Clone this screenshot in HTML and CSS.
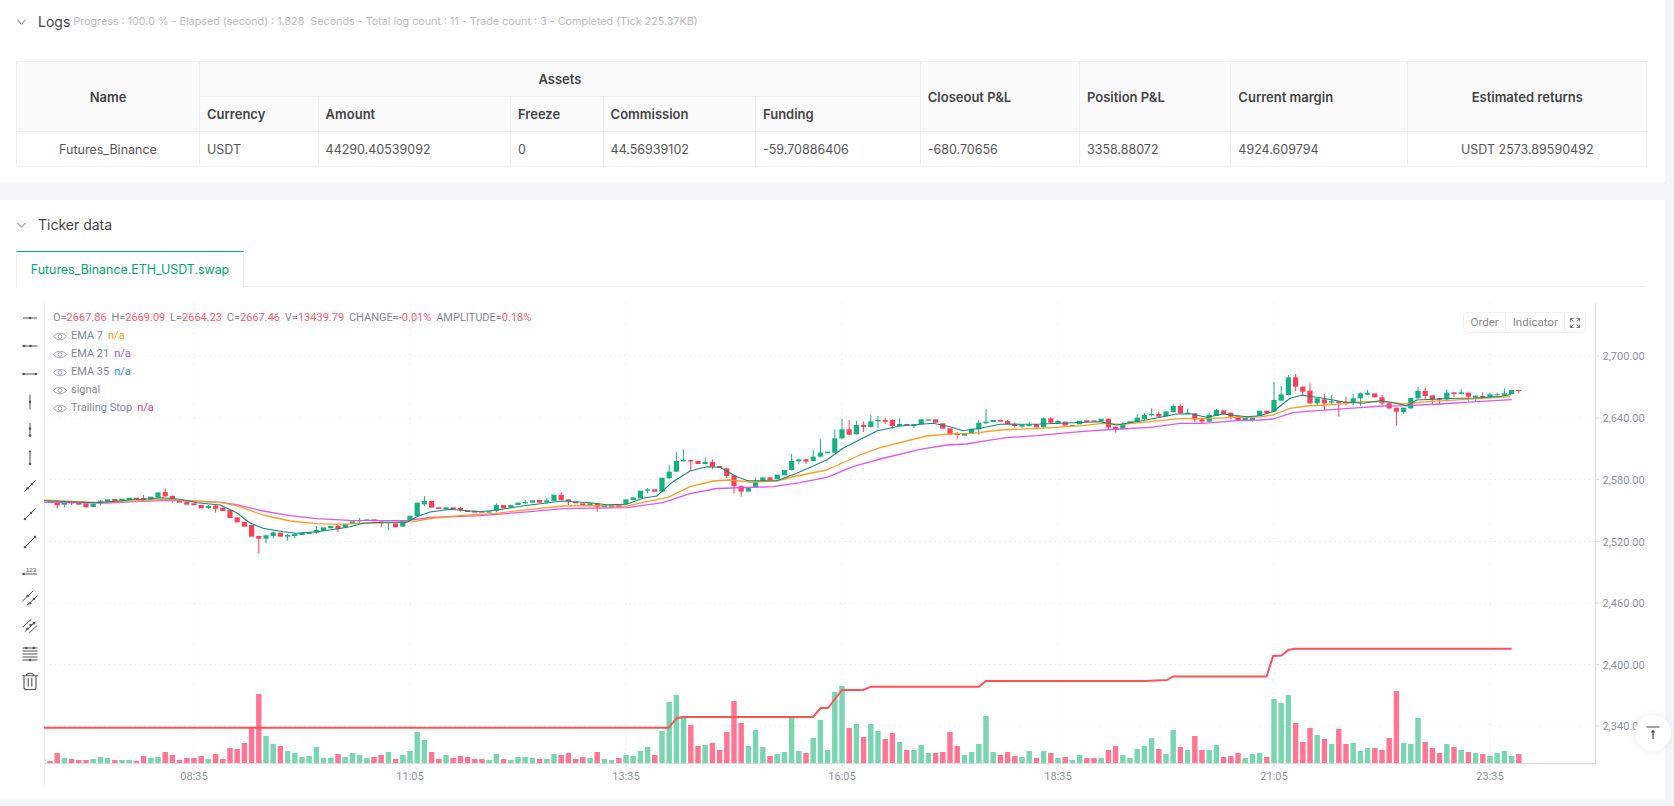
FILE: index.html
```html
<!DOCTYPE html>
<html lang="en">
<head>
<meta charset="utf-8">
<title>Backtest result</title>
<link rel="stylesheet" href="styles.css">
</head>
<body>
<section class="card card-logs">
  <header class="section-head">
    <svg class="chevron" viewBox="0 0 10 6"><path d="M.5.5 5 5.5 9.5.5"/></svg>
    <h2 class="section-title">Logs</h2>
    <span class="section-note">Progress : 100.0 % - Elapsed (second) : 1.828 &nbsp;Seconds - Total log count : 11 - Trade count : 3 - Completed (Tick 225.37KB)</span>
  </header>
  <table class="assets">
    <colgroup>
      <col class="c-name"><col class="c-currency"><col class="c-amount"><col class="c-freeze"><col class="c-commission">
      <col class="c-funding"><col class="c-closeout"><col class="c-position"><col class="c-margin"><col class="c-returns">
    </colgroup>
    <thead>
      <tr>
        <th rowspan="2" class="center">Name</th>
        <th colspan="5" class="center">Assets</th>
        <th rowspan="2">Closeout P&amp;L</th>
        <th rowspan="2">Position P&amp;L</th>
        <th rowspan="2">Current margin</th>
        <th rowspan="2" class="center">Estimated returns</th>
      </tr>
      <tr><th>Currency</th><th>Amount</th><th>Freeze</th><th>Commission</th><th>Funding</th></tr>
    </thead>
    <tbody>
      <tr>
        <td class="center">Futures_Binance</td><td>USDT</td><td>44290.40539092</td><td>0</td><td>44.56939102</td>
        <td>-59.70886406</td><td>-680.70656</td><td>3358.88072</td><td>4924.609794</td><td class="center">USDT 2573.89590492</td>
      </tr>
    </tbody>
  </table>
</section>

<section class="card card-ticker">
  <header class="section-head">
    <svg class="chevron" viewBox="0 0 10 6"><path d="M.5.5 5 5.5 9.5.5"/></svg>
    <h2 class="section-title">Ticker data</h2>
  </header>
  <div class="tabs"><div class="tab">Futures_Binance.ETH_USDT.swap</div></div>
  <div class="chart">
    <div class="toolbar">
      <svg class="tool" viewBox="0 0 20 20"><path d="M3 10h14"/><circle cx="10" cy="10" r="1.3"/></svg>
      <svg class="tool" viewBox="0 0 20 20"><path d="M2.500 10h15"/><circle cx="4" cy="10" r="1.3"/><circle cx="10.500" cy="10" r="1.3"/></svg>
      <svg class="tool" viewBox="0 0 20 20"><path d="M3.500 10h13"/><circle cx="3.500" cy="10" r="1.3"/><circle cx="16" cy="10" r="1.3"/></svg>
      <svg class="tool" viewBox="0 0 20 20"><path d="M10 2.500v15"/><circle cx="10" cy="10" r="1.3"/></svg>
      <svg class="tool" viewBox="0 0 20 20"><path d="M10 3v14"/><circle cx="10" cy="8.500" r="1.3"/><circle cx="10" cy="15.500" r="1.3"/></svg>
      <svg class="tool" viewBox="0 0 20 20"><path d="M10 3v14"/><circle cx="10" cy="3.500" r="1.1"/><circle cx="10" cy="16" r="1.3"/></svg>
      <svg class="tool" viewBox="0 0 20 20"><path d="M4.300 15.700 15.700 4.300"/><circle cx="7.700" cy="12.300" r="1.3"/><circle cx="12" cy="8" r="1.3"/></svg>
      <svg class="tool" viewBox="0 0 20 20"><path d="M5 15 15.500 4.500"/><circle cx="5" cy="15" r="1.3"/><circle cx="11" cy="9" r="1.3"/></svg>
      <svg class="tool" viewBox="0 0 20 20"><path d="M5 15 15 5"/><circle cx="5" cy="15" r="1.300"/><circle cx="15" cy="5" r="1.300"/></svg>
      <svg class="tool" viewBox="0 0 20 20"><path d="M3 14h14"/><circle cx="3.500" cy="14" r="1.300"/><text class="tool-num" x="11" y="12">123</text></svg>
      <svg class="tool" viewBox="0 0 20 20"><path d="M2.300 13.300 13.300 2.700M6.700 17.700 17.300 7.700"/><circle cx="7.700" cy="8" r="1.300"/><circle cx="10" cy="15.300" r="1.300"/><circle cx="14" cy="11" r="1.300"/></svg>
      <svg class="tool" viewBox="0 0 20 20"><path d="M3 11 11.300 3.300M4.700 15.700 15.700 5.700M9.300 17 17.300 9.300"/><circle cx="7.300" cy="12.700" r="1.300"/><circle cx="10.700" cy="9" r="1.300"/><circle cx="14" cy="7.300" r="1.300"/></svg>
      <svg class="tool" viewBox="0 0 20 20"><path d="M2.500 4h15M2.500 7h15M2.500 10h15M2.500 13h15M2.500 16h15"/><circle cx="6.300" cy="4" r="1.300"/><circle cx="13.700" cy="4" r="1.300"/><circle cx="10" cy="16" r="1.300"/></svg>
      <svg class="tool tool-trash" viewBox="0 0 20 20"><path d="M2.200 3.700h15.600M6.500 3.500c0-3 7-3 7 0M4 4v11.500c0 1.300.7 2 2 2h8c1.300 0 2-.7 2-2V4M8.200 6v8.500M11.800 6v8.500"/></svg>
    </div>
    <div class="plot">
      <svg id="plot-svg" class="plot-svg" viewBox="44 303 1602 482"></svg>
      <div class="legend">
        <div class="legend-row">
          <span>O=</span><b>2667.86</b> <span>H=</span><b>2669.09</b> <span>L=</span><b>2664.23</b> <span>C=</span><b>2667.46</b> <span>V=</span><b>13439.79</b> <span>CHANGE=</span><b>-0.01%</b> <span>AMPLITUDE=</span><b>0.18%</b>
        </div>
        <div class="legend-row"><svg class="eye" viewBox="0 0 14 9"><path d="M.6 4.500C3.500.2 10.500.2 13.400 4.500 10.500 8.800 3.500 8.800.6 4.500Z"/><circle cx="7" cy="4.500" r="2"/></svg><span>EMA 7</span><i class="v-orange">n/a</i></div>
        <div class="legend-row"><svg class="eye" viewBox="0 0 14 9"><path d="M.6 4.500C3.500.2 10.500.2 13.400 4.500 10.500 8.800 3.500 8.800.6 4.500Z"/><circle cx="7" cy="4.500" r="2"/></svg><span>EMA 21</span><i class="v-purple">n/a</i></div>
        <div class="legend-row"><svg class="eye" viewBox="0 0 14 9"><path d="M.6 4.500C3.500.2 10.500.2 13.400 4.500 10.500 8.800 3.500 8.800.6 4.500Z"/><circle cx="7" cy="4.500" r="2"/></svg><span>EMA 35</span><i class="v-blue">n/a</i></div>
        <div class="legend-row"><svg class="eye" viewBox="0 0 14 9"><path d="M.6 4.500C3.500.2 10.500.2 13.400 4.500 10.500 8.800 3.500 8.800.6 4.500Z"/><circle cx="7" cy="4.500" r="2"/></svg><span>signal</span></div>
        <div class="legend-row"><svg class="eye" viewBox="0 0 14 9"><path d="M.6 4.500C3.500.2 10.500.2 13.400 4.500 10.500 8.800 3.500 8.800.6 4.500Z"/><circle cx="7" cy="4.500" r="2"/></svg><span>Trailing Stop</span><i class="v-pink">n/a</i></div>
      </div>
      <div class="chart-buttons">
        <div class="chart-btn">Order</div>
        <div class="chart-btn">Indicator</div>
        <div class="chart-btn chart-btn-icon"><svg viewBox="0 0 10 10"><path d="M.5 3.500V.5h3M.5.5 3.500 3.500M6.500.5h3v3M9.500.5 6.500 3.500M.5 6.500v3h3M.5 9.500l3-3M9.500 6.500v3h-3M9.500 9.500l-3-3"/></svg></div>
      </div>
    </div>
  </div>
</section>

<button class="back-top" type="button" aria-label="Back to top">
  <svg viewBox="0 0 14 14"><path class="bar" d="M.5 1h13"/><path class="arrow" d="M7 13V5"/><path class="head" d="M4.800 6.500 7 3.800l2.200 2.700Z"/></svg>
</button>
<script src="script.js"></script>
</body>
</html>
```

FILE: styles.css
```css
* { box-sizing: border-box; }
html, body { height: 100%; }
body {
  margin: 0;
  padding-right: 9px;
  background: #f4f5f7;
  font-family: Inter, "Liberation Sans", sans-serif;
  color: #555;
  overflow: hidden;
}
.card { background: #fff; padding: 0 19px 0 16px; }
.card-logs { height: 182px; margin-bottom: 18px; }
.card-ticker { height: 599px; }
.section-head { display: flex; align-items: center; height: 50px; margin-bottom: 1px; }
.card-logs .section-head { height: 43px; margin-bottom: 18px; }
.chevron { width: 9px; height: 6px; margin: 0 12px 0 1px; fill: none; stroke: #666; stroke-width: 1; }
.section-title { margin: 0; font-size: 14px; font-weight: 400; color: #444; line-height: 20px; }
.section-note { margin-left: 3px; font-size: 10.750px; color: #bbb; }

.assets { width: 1630px; table-layout: fixed; border-collapse: collapse; font-size: 13px; }
.assets th, .assets td { height: 35px; padding: 0 7px; border: 1px solid #eee; text-align: left; }
.assets th { background: #fafafa; font-weight: 600; color: #444; }
.assets td { font-size: 12.500px; font-weight: 400; color: #555; }
.assets .center { text-align: center; }
.c-name { width: 183px; } .c-currency { width: 118.600px; } .c-amount { width: 192.400px; }
.c-freeze { width: 92.600px; } .c-commission { width: 152.400px; } .c-funding { width: 164.800px; }
.c-closeout { width: 159.200px; } .c-position { width: 151.400px; } .c-margin { width: 177px; } .c-returns { width: 238.800px; }

.tabs { height: 36px; border-bottom: 1px solid #eee; }
.tab {
  width: 228px; height: 36px; display: flex; align-items: center; justify-content: center;
  border: 1px solid #eee; border-top: 1px solid #00a870; border-bottom: 0;
  font-size: 12.400px; color: #00a870; background: #fff;
}

.chart { display: flex; margin-top: 16px; height: 482px; }
.toolbar { width: 28px; display: flex; flex-direction: column; flex: none; padding-top: 4px; }
.tool { width: 20px; height: 20px; margin: 1px 4px 7px 4px; fill: #555; stroke: none; flex: none; }
.tool path { fill: none; stroke: #555; stroke-width: 1; }
.tool-num { font: 6px "Liberation Sans", sans-serif; fill: #555; text-anchor: middle; }
.tool-trash path { stroke-width: 1.100; }
.plot { position: relative; width: 1602px; height: 482px; }
.plot-svg { display: block; width: 1602px; height: 482px; }
.ax-label { font: 11px Roboto, sans-serif; fill: #8a93a0; }
.ax-center { text-anchor: middle; }

.legend { position: absolute; left: 9px; top: 6px; font: 11px/18px Roboto, sans-serif; color: #7f8794; }
.legend-row { display: flex; align-items: center; height: 18px; white-space: pre; }
.legend-row b { font-weight: 400; color: #ff5a6a; margin-right: 4.800px; }
.legend-row i { font-style: normal; margin-left: 5px; }
.eye { width: 14px; height: 9px; margin-right: 4px; fill: none; stroke: #8a919c; stroke-width: .8; }
.v-orange { color: #ff9800; } .v-purple { color: #9b59c6; } .v-blue { color: #2f88f5; } .v-pink { color: #e6308f; }

.chart-buttons {
  position: absolute; left: 1419px; top: 9px; height: 21px; display: flex;
  border: 1px solid #f0f0f0; border-radius: 4px; background: #fff;
  font: 11.500px/19px Roboto, sans-serif; color: #888;
}
.chart-btn { padding: 0 6.500px; border-right: 1px solid #f0f0f0; }
.chart-btn-icon { border: 0; padding: 0 5px; display: flex; align-items: center; }
.chart-btn-icon svg { width: 10px; height: 10px; fill: none; stroke: #666; stroke-width: .9; }

.back-top {
  position: fixed; left: 1635px; top: 715px; width: 36px; height: 36px; padding: 0;
  display: flex; align-items: center; justify-content: center;
  border: 0; border-radius: 50%; background: #fff; box-shadow: 0 0 10px rgba(0,0,0,.08);
}
.back-top svg { width: 14px; height: 14px; }
.back-top .bar, .back-top .arrow { fill: none; stroke: #444; stroke-width: 1; }
.back-top .arrow { stroke-width: 1.2; }
.back-top .head { fill: #444; }
```

FILE: script.js
```js
(function () {
  var NS = 'http://www.w3.org/2000/svg';
  var svg = document.getElementById('plot-svg');
  var UP = '#17b080', DOWN = '#ff3d57';
  var VOL_UP = '#7ad6b1', VOL_DOWN = '#ff7593';
  var X = function (i) { return 50 + 7.2 * i; };

  function el(name, attrs, text) {
    var n = document.createElementNS(NS, name);
    for (var k in attrs) n.setAttribute(k, attrs[k]);
    if (text) n.textContent = text;
    svg.appendChild(n);
    return n;
  }

  // grid
  [356, 418, 479.500, 541.500, 603, 664.500, 726].forEach(function (y) {
    el('line', { x1: 44, x2: 1595, y1: y, y2: y, stroke: '#eeeff1', 'stroke-width': 1, 'stroke-dasharray': '2 3' });
  });
  [194, 410, 626, 842, 1058, 1274, 1490].forEach(function (x) {
    el('line', { x1: x, x2: x, y1: 303, y2: 763, stroke: '#eeeff1', 'stroke-width': 1, 'stroke-dasharray': '2 3' });
  });

  // volume heights in px, from bar -1 to bar 204
  var vols = [4, 2, 10, 5, 4, 3, 3, 4, 6, 5, 3, 3, 3, 2, 7, 5, 6, 11, 8, 3, 5, 5, 7, 4, 9, 4, 15, 14, 20, 36, 69,
    27, 19, 17, 12, 10, 6, 7, 16, 5, 5, 9, 6, 10, 8, 5, 6, 8, 11, 4, 8, 12, 31, 23, 11, 4, 8, 5, 7, 6, 4, 4, 3, 9, 4, 3, 6, 6,
    5, 4, 4, 9, 8, 10, 4, 6, 5, 11, 4, 3, 5, 8, 7, 12, 16, 8, 32, 61, 68, 46, 38, 17, 18, 20, 13, 31, 62, 40, 17, 33, 16, 7, 9,
    11, 46, 12, 10, 25, 43, 13, 71, 77, 35, 39, 26, 39, 32, 24, 30, 21, 13, 13, 18, 10, 10, 11, 31, 17, 8, 11, 19, 47, 11, 8,
    11, 7, 6, 12, 5, 12, 10, 5, 6, 3, 8, 5, 5, 5, 13, 17, 8, 5, 14, 17, 25, 14, 9, 33, 16, 13, 27, 13, 13, 18, 6, 7, 10, 5, 9,
    10, 6, 64, 60, 68, 40, 21, 35, 28, 24, 19, 34, 19, 20, 12, 15, 15, 13, 25, 72, 20, 19, 45, 21, 15, 10, 19, 16, 13, 11, 10, 9,
    7, 10, 12, 7, 9];
  var red = {};
  // down bars by index; everything else is up
  [0, 1, 3, 4, 5, 9, 12, 13, 16, 17, 18, 19, 20, 21, 23, 24, 25, 26, 27, 28, 29, 32, 40, 45, 46, 48, 53, 54, 56, 57, 58, 59, 60,
    63, 68, 71, 72, 73, 74, 76, 79, 84, 89, 90, 92, 93, 94, 95, 96, 100, 105, 111, 113, 116, 117, 119, 123, 124, 125, 126, 132,
    133, 134, 137, 139, 141, 144, 145, 147, 148, 154, 157, 159, 160, 163, 164, 165, 169, 173, 174, 175, 177, 179, 180, 184, 185,
    186, 187, 191, 192, 193, 195, 197, 199, 204].forEach(function (i) { red[i] = true; });

  for (var v = 0; v < vols.length; v++) {
    var vi = v - 1, h = vols[v];
    el('rect', { x: X(vi) - 2.7, y: 763 - h, width: 5.4, height: h, fill: red[vi] ? VOL_DOWN : VOL_UP });
  }

  // axes
  el('path', { d: 'M44.500 303V785', stroke: '#eeeeee', fill: 'none' });
  el('path', { d: 'M44 763.500H1595.500V303', stroke: '#dcdcdc', fill: 'none' });
  [[356, '2,700.00'], [418, '2,640.00'], [479.500, '2,580.00'], [541.500, '2,520.00'], [603, '2,460.00'], [664.500, '2,400.00'], [726, '2,340.00']].forEach(function (t) {
    el('line', { x1: 1595, x2: 1599, y1: t[0], y2: t[0], stroke: '#dcdcdc' });
    el('text', { x: 1602.500, y: t[0] + 4, 'class': 'ax-label' }, t[1]);
  });
  [[194, '08:35'], [410, '11:05'], [626, '13:35'], [842, '16:05'], [1058, '18:35'], [1274, '21:05'], [1490, '23:35']].forEach(function (t) {
    el('line', { x1: t[0], x2: t[0], y1: 763, y2: 767, stroke: '#dcdcdc' });
    el('text', { x: t[0], y: 780, 'class': 'ax-label ax-center' }, t[1]);
  });

  // candles, read in 3x crop units: [bodyTop, bodyBottom, wickTop, wickBottom], y = base + value / 3
  var sections = [
    { start: 0, base: 470, rows: [[94,99],[97,106,94,116],[99,104,97,112],[97,99,95,105],[98,104,96,106],[100,112],[101,111],[92,100,90,106],[88,96],[87,94],[86,92],[83,90],[83,88],[84,92,75,94],[80,90],[67,83],[66,79,55,80],[78,86,76,98],[90,98],[96,104],[100,106],[105,115],[108,114,105,118],[107,116,105,128],[113,123],[120,144],[142,157],[155,170],[165,200],[198,206,198,250],[196,206,194,220],[187,198,185,205],[188,200],[195,200,193,212],[192,198,190,205],[188,195],[187,192],[180,188,168,192],[172,183],[168,175],[168,177,160,186],[162,172],[154,162],[150,154,144,158],[148,152],[148,154],[155,160,155,170],[157,160,155,180],[160,172],[150,170],[137,150],[98,138],[93,103,78,108]] },
    { start: 53, base: 450, rows: [[153,173],[172,177],[172,178],[172,178],[174,180,170,186],[181,186],[182,188],[185,188],[184,188],[165,182,160,187],[165,175],[165,173],[158,165],[156,160,150,162],[151,158],[150,158],[151,157,145,159],[134,153],[135,150,127,152],[148,155,148,165],[155,160],[160,165],[160,167],[160,172,158,186],[165,172],[165,172],[165,172]] },
    { start: 80, base: 400, rows: [[298,312],[292,300],[272,295],[268,272,264,280],[268,275],[233,275],[215,235,195,236],[183,215,155,216],[180,184,148,185],[180,184,180,214],[183,192],[186,192,172,193],[186,200,178,208],[198,204],[205,228,205,235],[226,258,226,280],[258,275,256,290],[262,275],[245,262,232,263],[232,243],[232,240],[224,238],[210,226],[183,210,162,211],[178,184,176,192],[178,185,176,192],[170,183,150,184],[158,170,118,171],[155,160],[115,158,88,159],[88,115,57,116],[88,104,60,105],[75,103,62,104],[75,81,65,96],[64,81,45,82],[60,64,48,85],[60,65,53,72],[60,78,58,86],[72,78,55,79],[72,76],[74,78,72,84],[58,72],[58,62],[58,68],[70,86],[85,104],[100,105,96,116],[102,107],[86,102],[68,88,60,105],[65,70,27,71],[60,66],[60,65]] },
    { start: 133, base: 370, rows: [[153,162,150,163],[162,168,158,172],[164,170,162,174],[163,168,156,170],[162,172],[145,172,142,173],[145,158,142,159],[153,160,150,161],[155,167],[165,168],[152,163],[151,156],[151,155],[146,155],[146,172,146,178],[170,177,170,188],[163,177,155,178],[154,160],[143,156,132,157],[135,147,128,150],[132,136,115,137],[132,140,124,141],[124,139],[108,126,103,127],[108,130,103,131],[128,131,115,132],[130,148,130,157],[148,155,148,162],[135,155,128,156],[120,137,117,138],[121,132],[128,140,128,147],[139,150],[143,150],[143,150,143,155]] },
    { start: 168, base: 360, rows: [[152,168],[152,160],[120,155,65,156],[103,122,78,123],[52,105,45,106],[52,80,42,93],[80,95,80,105],[92,130,70,131],[115,130,115,135],[118,130,102,150],[124,128,105,134],[124,129,124,170],[126,132,110,136],[115,128,102,135],[100,115,97,137],[98,104,90,106],[100,112],[112,130,105,135],[130,145,130,148],[143,155,143,197],[143,156,143,162],[114,145,114,148],[93,115,80,116],[93,108,82,118],[106,118,106,133],[114,119,114,135],[98,118,88,125],[97,102,97,112],[97,102,88,103],[98,110,98,122],[107,112,107,126],[108,111,97,112],[103,112,98,113],[103,106,98,107],[100,106,85,107],[90,102],[90,93,90,100]] }
  ];
  sections.forEach(function (s) {
    s.rows.forEach(function (r, n) {
      var i = s.start + n, c = red[i] ? DOWN : UP, x = X(i);
      var top = s.base + r[0] / 3, bot = s.base + r[1] / 3;
      var wt = r[2] === undefined ? top : s.base + r[2] / 3;
      var wb = r[3] === undefined ? bot : s.base + r[3] / 3;
      if (wt < top || wb > bot) el('line', { x1: x, x2: x, y1: wt, y2: wb, stroke: c, 'stroke-width': 1 });
      el('rect', { x: x - 2.6, y: top, width: 5.2, height: Math.max(bot - top, 1), fill: c });
    });
  });

  // moving averages and trailing stop: page coordinates
  var magenta = '44,502.300 73,502.700 107,503 140,501.300 170,500.300 196.700,501.300 220,502.300 236.700,504.700 263,511 290,515.700 316.700,518.700 350,520.300 380,520.700 406.700,520.700 430,517.500 480,515.700 530,511.700 563,508.700 626.700,507.700 663,502.700 690,493.700 716.700,488.500 746.700,487.500 773,486.700 800,482.700 826.700,477.300 853,466.700 880,459 920,449.300 946.700,445 966.700,444 986.700,440.700 1006.700,437.700 1036.700,435.700 1083,431.300 1120,429 1150,427.300 1180,423.300 1203,423.300 1236.700,420.700 1260,420 1273,419 1293,412.700 1316.700,410.700 1360,407.700 1383,406 1406.700,405.700 1440,404 1476.700,401.700 1511.700,399.700';
  var orange = '44,500 73,501.300 96.700,502.300 130,501.300 163,499.300 196.700,501 220,502.300 236.700,505.700 263,515 290,521 316.700,523.700 336.700,524.300 363,523.300 396.700,522.300 413,521.700 430,518.500 463,515.300 496.700,513.300 530,509.300 563,506 590,505.700 626.700,506.200 643,502.300 668,497.300 690,486.700 713,481 730,480 750,482 776.700,481 796.700,476 826.700,470 860,455 880,447.700 926.700,436 953,433.700 973,433.300 1000,430 1040,428.300 1083,425.700 1103,423.300 1123,424.300 1150,421.700 1180,418.700 1203,418.700 1236.700,417.300 1260,416.900 1273,415 1290,408.300 1306.700,406 1336.700,404.300 1363,401.700 1386.700,401.700 1403,404 1426.700,401.700 1466.700,399.300 1510,396.700';
  var teal = '44,500.700 96.700,502.700 130,500 163,497.700 180,499.300 196.700,502.700 220,505 236.700,512.700 250,523 263,528.300 283,531.700 296.700,533.300 316.700,531.700 336.700,529 350,526.700 363,523.300 383,522.300 406.700,522.300 416.700,516.700 430,512 450,509.300 480,511.700 496.700,510 530,505 563,501 590,502.700 606.700,504.700 626.700,504.300 643,498.300 656.700,496 673,481.700 690,471 706.700,466.700 720,467.300 736.700,476.700 748,480.700 776.700,480.700 796.700,473.300 826.700,460 843,448.300 876.700,431 900,426 933,423.300 950,426.700 963,430.700 980,428.300 1000,424.300 1040,424 1100,421.700 1116.700,425 1150,419.300 1176.700,414 1190,413.700 1206.700,417.300 1223,414 1246.700,416.700 1260,415.700 1273,411.700 1290,398.300 1301.700,395.300 1316.700,397.300 1343,401.700 1363,403.300 1380,400.700 1393,402.700 1406.700,405.700 1416.700,400 1450,398.500 1473,398 1500,396.500 1511,394.500';
  var stop = '44,727.700 668.700,727.700 677,718 683,717 813,717 820.700,708 828,708 842,690 863,690 871,686.700 979,686.700 986,681 1145,681 1167,680 1173,676.500 1266.700,676.500 1273,656 1281.700,655.500 1288,650 1295,648.700 1511.700,648.700';
  [[magenta, '#e552f5', 1.300], [orange, '#ff9d1e', 1.300], [teal, '#0d8a7c', 1.100], [stop, '#ff5058', 2]].forEach(function (l) {
    el('polyline', { points: l[0], fill: 'none', stroke: l[1], 'stroke-width': l[2], 'stroke-linejoin': 'round' });
  });
})();
```
